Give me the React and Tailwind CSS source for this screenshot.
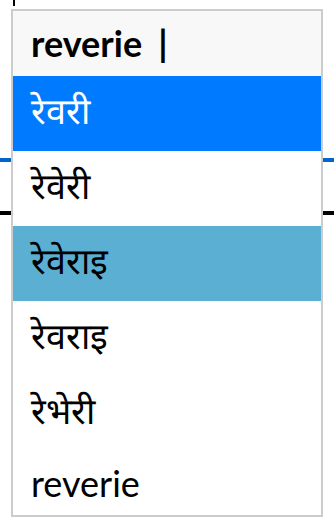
export default function App() {
  const rows = [
    { t: "रेवरी", cls: "bg-[#007bff] text-white" },
    { t: "रेवेरी", cls: "bg-white text-black" },
    { t: "रेवेराइ", cls: "bg-[#5aafd2] text-black" },
    { t: "रेवराइ", cls: "bg-white text-black" },
    { t: "रेभेरी", cls: "bg-white text-black" },
    { t: "reverie", cls: "bg-white text-black" },
  ];
  return (
    <div className="relative w-[334px] h-[524px] bg-white overflow-hidden font-[Lato,sans-serif]">
      <div className="ml-[13px] w-[2px] h-[6px] bg-black" />
      <div className="mt-[152px] h-[4px] bg-[#0066cc]" />
      <div className="mt-[49px] h-[4px] bg-black" />
      <div className="absolute left-[11px] top-[9px] w-[312px] h-[508px] border-2 border-[#cccccc] bg-white overflow-hidden flex flex-col">
        <div className="shrink-0 h-[65px] bg-[#f8f8f8] pt-[10px] pl-[18px] text-[36px] leading-[normal] font-bold text-black whitespace-nowrap">
          reverie<span className="ml-[16px]">|</span>
        </div>
        {rows.map((r, i) => (
          <div
            key={i}
            className={`shrink-0 h-[75px] pt-[10px] pl-[18px] text-[36px] leading-[normal] whitespace-nowrap ${r.cls}`}
          >
            {r.t}
          </div>
        ))}
      </div>
    </div>
  );
}
